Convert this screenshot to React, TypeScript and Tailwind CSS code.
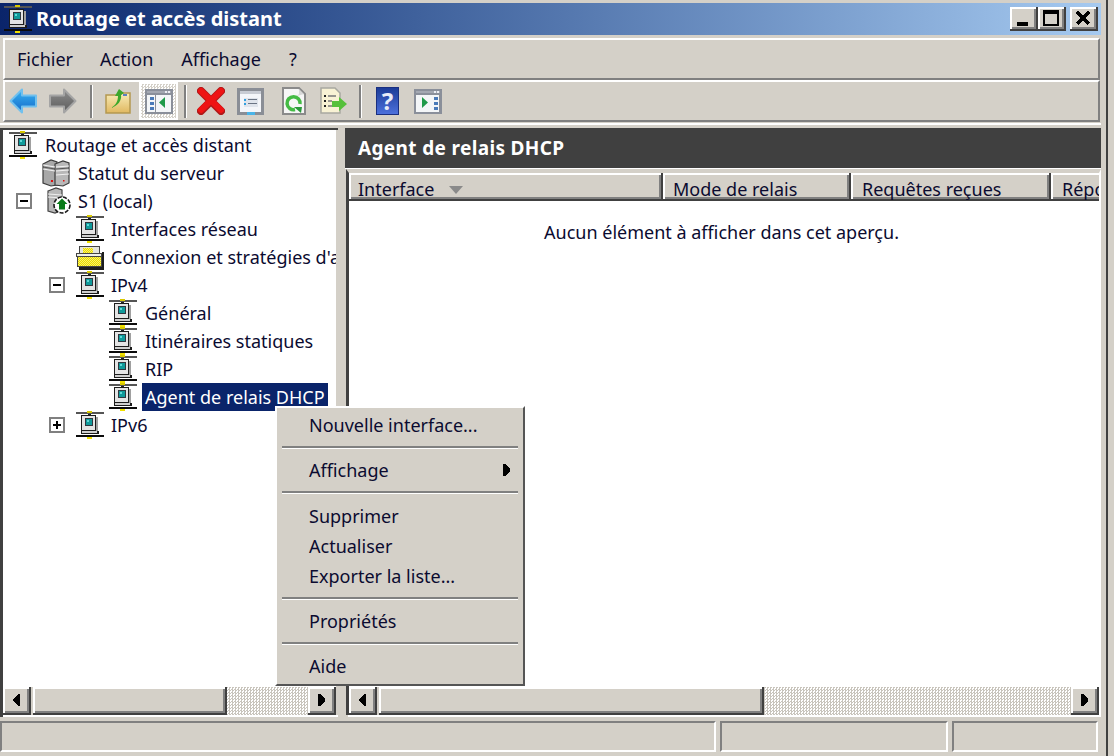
import React from "react";

// classic win2k bevel for buttons and scroll thumbs
const bevel =
    "bg-[#d4d0c8] border-r-2 border-b-2 border-[#404040] shadow-[inset_2px_2px_0_#fff,inset_-2px_-2px_0_#808080]";

function Computer({ size = 28 }: { size?: number }) {
    return (
        <svg width={size} height={size} viewBox="0 0 28 28" shapeRendering="crispEdges" className="shrink-0">
            <rect x="0" y="1" width="28" height="2" fill="#555" />
            <rect x="11" y="0" width="5" height="2" fill="#d8c800" />
            <rect x="12" y="3" width="3" height="1" fill="#222" />
            <rect x="5" y="4" width="15" height="16" fill="#1c1c1c" />
            <rect x="6" y="5" width="13" height="14" fill="#e4e4e4" />
            <rect x="9" y="7" width="8" height="8" fill="#303840" />
            <rect x="10" y="8" width="6" height="6" fill="#109a9a" />
            <rect x="11" y="9" width="2" height="2" fill="#60d8d8" />
            <rect x="20" y="6" width="2" height="14" fill="#a0a0a0" />
            <rect x="5" y="20" width="18" height="3" fill="#1c1c1c" />
            <rect x="6" y="20" width="15" height="2" fill="#cfcfcf" />
            <rect x="0" y="24" width="28" height="2" fill="#0c0c0c" />
            <rect x="11" y="26" width="5" height="2" fill="#f0e000" />
        </svg>
    );
}

function Servers() {
    return (
        <svg width="28" height="28" viewBox="0 0 28 28" className="shrink-0">
            <path d="M1 5 L9 1 L15 3 V26 L9 27 L1 24 Z" fill="#a8a8a8" stroke="#3c3c3c" strokeWidth="1.2" />
            <path d="M13 5 L21 2 L27 4 V24 L21 27 L13 26 Z" fill="#b8b8b8" stroke="#3c3c3c" strokeWidth="1.2" />
            <path d="M1 6 L13 8 M1 10 L13 12 M14 8 L27 7 M14 12 L27 11 M14 16 L27 15" stroke="#f0f0f0" strokeWidth="1.2" />
            <path d="M1 8 L13 10 M14 10 L27 9" stroke="#555" strokeWidth="1.2" />
            <rect x="9" y="21" width="2" height="2" fill="#e01010" />
            <rect x="21" y="21" width="1.5" height="1.5" fill="#e01010" />
        </svg>
    );
}

function ServerLocal() {
    return (
        <svg width="24" height="28" viewBox="0 0 24 28" className="shrink-0">
            <path d="M1 4 L9 1 L15 3 V23 L8 26 L1 24 Z" fill="#b8b8b8" stroke="#444" strokeWidth="1.2" />
            <path d="M1 7 L15 8 M1 10 L15 11" stroke="#eee" strokeWidth="1.2" />
            <circle cx="15" cy="18" r="8" fill="#fff" stroke="#1a1a1a" strokeWidth="1.6" strokeDasharray="4 1.5" />
            <path d="M15 11.5 L20.5 17 H18 V22.5 H12 V17 H9.5 Z" fill="#087a18" />
        </svg>
    );
}

function FolderPolicy() {
    return (
        <svg width="28" height="28" viewBox="0 0 28 28" shapeRendering="crispEdges" className="shrink-0">
            <defs>
                <pattern id="yellowdots" width="2" height="2" patternUnits="userSpaceOnUse">
                    <rect width="2" height="2" fill="#fbf36a" />
                    <rect width="1" height="1" fill="#e8d800" />
                    <rect x="1" y="1" width="1" height="1" fill="#e8d800" />
                </pattern>
            </defs>
            <rect x="3.5" y="3.5" width="20" height="7" fill="#e4e4dc" stroke="#444" />
            <rect x="7" y="5" width="10" height="5" fill="url(#yellowdots)" />
            <rect x="0.5" y="10.5" width="25" height="3" fill="#f0f0e8" stroke="#444" />
            <rect x="1.5" y="13.5" width="24" height="10" fill="url(#yellowdots)" stroke="#444" />
            <rect x="3" y="24" width="25" height="3" fill="#1c1c1c" />
            <rect x="26" y="9" width="2" height="18" fill="#1c1c1c" />
        </svg>
    );
}

function Expander({ open }: { open: boolean }) {
    return (
        <div className="w-4 h-4 border-2 border-[#808080] bg-white flex items-center justify-center shrink-0 relative">
            <div className="w-2 h-[2px] bg-black" />
            {!open && <div className="absolute w-[2px] h-2 bg-black" />}
        </div>
    );
}

type Node = {
    label: string;
    pad: number;
    icon?: "computer" | "servers" | "local" | "folder";
    gap: number;
    expander?: "open" | "closed";
    expanderPad?: number;
    selected?: boolean;
};

const tree: Node[] = [
    { label: "Routage et accès distant", pad: 6, gap: 8 },
    { label: "Statut du serveur", pad: 39, icon: "servers", gap: 8 },
    { label: "S1 (local)", pad: 44, icon: "local", gap: 7, expander: "open", expanderPad: 13 },
    { label: "Interfaces réseau", pad: 73, gap: 7 },
    { label: "Connexion et stratégies d'accès distant", pad: 73, icon: "folder", gap: 7 },
    { label: "IPv4", pad: 73, gap: 7, expander: "open", expanderPad: 46 },
    { label: "Général", pad: 106, gap: 8 },
    { label: "Itinéraires statiques", pad: 106, gap: 8 },
    { label: "RIP", pad: 106, gap: 8 },
    { label: "Agent de relais DHCP", pad: 106, gap: 5, selected: true },
    { label: "IPv6", pad: 73, gap: 7, expander: "closed", expanderPad: 46 },
];

function NodeIcon({ icon }: { icon?: Node["icon"] }) {
    if (icon === "servers") return <Servers />;
    if (icon === "local") return <ServerLocal />;
    if (icon === "folder") return <FolderPolicy />;
    return <Computer />;
}

function TreeRow({ node }: { node: Node }) {
    const left = node.expander ? node.expanderPad ?? 0 : node.pad;
    return (
        <div className="h-7 flex items-center whitespace-nowrap text-[#0b0b30]" style={{ paddingLeft: left }}>
            {node.expander && (
                <div className="flex items-center" style={{ width: node.pad - left }}>
                    <Expander open={node.expander === "open"} />
                </div>
            )}
            <NodeIcon icon={node.icon} />
            <span
                className={node.selected ? "bg-[#0a246a] text-white h-7 leading-[28px] px-[3px]" : ""}
                style={{ marginLeft: node.gap }}
            >
                {node.label}
            </span>
        </div>
    );
}

function ScrollArrow({ dir }: { dir: "left" | "right" }) {
    return (
        <div className={`${bevel} w-[28px] h-[28px] flex items-center justify-center shrink-0`}>
            <svg width="7" height="12" viewBox="0 0 7 12" shapeRendering="crispEdges">
                {dir === "left" ? <path d="M7 0 V12 H5 L0 7 V5 L5 0 Z" /> : <path d="M0 0 V12 H2 L7 7 V5 L2 0 Z" />}
            </svg>
        </div>
    );
}

function Scrollbar({ thumb, className }: { thumb: number; className?: string }) {
    return (
        <div className={`h-[28px] flex shrink-0 bg-[repeating-conic-gradient(#c8c4bc_0_25%,#fff_0_50%)] bg-[length:3px_3px] ${className ?? ""}`}>
            <ScrollArrow dir="left" />
            <div className="w-[2px] bg-[#d4d0c8]" />
            <div className={`${bevel} h-[28px]`} style={{ width: thumb }} />
            <div className="flex-1" />
            <ScrollArrow dir="right" />
        </div>
    );
}

function Sep({ ml, mr }: { ml: number; mr: number }) {
    return (
        <div
            className="w-[3px] h-[33px] border-l-2 border-[#808080] border-r border-r-white shrink-0"
            style={{ marginLeft: ml, marginRight: mr }}
        />
    );
}

function ArrowIcon({ id, top, bottom, edge, flip }: { id: string; top: string; bottom: string; edge: string; flip?: boolean }) {
    return (
        <svg width="28" height="26" viewBox="0 0 28 26" className={flip ? "-scale-x-100 shrink-0" : "shrink-0"}>
            <defs>
                <linearGradient id={id} x1="0" y1="0" x2="0" y2="1">
                    <stop offset="0" stopColor={top} />
                    <stop offset="1" stopColor={bottom} />
                </linearGradient>
            </defs>
            <path d="M1.5 13 L13 1.5 V7.5 H27 V18.5 H13 V24.5 Z" fill={`url(#${id})`} stroke={edge} strokeWidth="2" strokeLinejoin="round" />
        </svg>
    );
}

function WinIcon({ green }: { green: "left" | "right" }) {
    const panel = green === "left" ? 3 : 18;
    const arrow = green === "left" ? "M20 8 V19 L14 13.5 Z" : "M8 8 V19 L14 13.5 Z";
    return (
        <svg width="28" height="25" viewBox="0 0 28 25" shapeRendering="crispEdges" className="shrink-0">
            <rect x="0" y="0" width="28" height="25" fill="#8a8f9a" />
            <rect x="2" y="6" width="24" height="17" fill="#f4f6f8" />
            <rect x="2" y="2" width="24" height="2" fill="#a4a8b2" />
            <rect x="20" y="2" width="2" height="2" fill="#eceef4" />
            <rect x="23" y="2" width="2" height="2" fill="#eceef4" />
            <rect x={panel + 7} y="6" width="1" height="17" fill="#8a8f9a" />
            <rect x={panel + 2} y="8" width="4" height="3" fill="#4a7ab8" />
            <rect x={panel + 2} y="13" width="4" height="3" fill="#4a7ab8" />
            <rect x={panel + 2} y="18" width="4" height="3" fill="#4a7ab8" />
            <path d={arrow} fill="#1f9a4a" shapeRendering="auto" />
        </svg>
    );
}

function Toolbar() {
    return (
        <div className="h-[42px] flex items-center border-t-2 border-t-white border-b-2 border-b-[#808080] border-r-2 border-r-[#808080] border-l-2 border-l-white ml-[3px] mr-[1px] shrink-0">
            <div className="ml-[4px]">
                <ArrowIcon id="back" top="#38b4f4" bottom="#1468c8" edge="#70c0ee" />
            </div>
            <div className="ml-[12px]">
                <ArrowIcon id="fwd" top="#8c8c8c" bottom="#5c5c5c" edge="#a4a4a4" flip />
            </div>
            <Sep ml={13} mr={12} />
            {/* folder up */}
            <svg width="26" height="26" viewBox="0 0 26 26" className="shrink-0">
                <defs>
                    <linearGradient id="folderUp" x1="0" y1="0" x2="0" y2="1">
                        <stop offset="0" stopColor="#f8ecb8" />
                        <stop offset="1" stopColor="#e0b860" />
                    </linearGradient>
                </defs>
                <path d="M1 7 H15 L17 5 H25 V25 H1 Z" fill="url(#folderUp)" stroke="#b49850" strokeWidth="1.5" />
                <rect x="18" y="6" width="4" height="2" fill="#5a80c0" />
                <path d="M6 20 C11 17 13 13 13 8 L10 8 L14 1 L19 5 L16 7 C17 12 13 18 6 20 Z" fill="#3ca82c" />
            </svg>
            <div className="w-[39px] h-[38px] ml-[8px] border-2 border-white bg-[repeating-conic-gradient(#d4d0c8_0_25%,#fff_0_50%)] bg-[length:3px_3px] flex items-center justify-center shrink-0">
                <WinIcon green="left" />
            </div>
            <Sep ml={6} mr={10} />
            {/* delete */}
            <svg width="28" height="28" viewBox="0 0 28 28" className="shrink-0">
                <path d="M4 4 L24 24 M24 4 L4 24" stroke="#b01818" strokeWidth="8" strokeLinecap="round" />
                <path d="M4 4 L24 23 M24 4 L4 23" stroke="#ee1414" strokeWidth="6" strokeLinecap="round" />
            </svg>
            {/* properties */}
            <svg width="28" height="27" viewBox="0 0 28 27" shapeRendering="crispEdges" className="ml-[12px] shrink-0">
                <rect x="0" y="0" width="27" height="27" fill="#8a8e96" />
                <rect x="3" y="3" width="21" height="21" fill="#f4f6fa" />
                <rect x="3" y="3" width="21" height="3" fill="#c8ccd4" />
                <rect x="7" y="10" width="14" height="9" fill="#dfe4ec" />
                <rect x="7" y="11" width="2" height="2" fill="#30a0e0" />
                <rect x="11" y="11" width="9" height="1" fill="#6a7484" />
                <rect x="7" y="15" width="2" height="2" fill="#30a0e0" />
                <rect x="11" y="15" width="9" height="1" fill="#6a7484" />
                <rect x="10" y="24" width="8" height="3" fill="#4ab4e8" />
            </svg>
            {/* refresh */}
            <svg width="24" height="28" viewBox="0 0 24 28" className="ml-[17px] shrink-0">
                <path d="M1 1 H17 L23 7 V27 H1 Z" fill="#f6f6f6" stroke="#8a8a8a" strokeWidth="2" />
                <path d="M15 9 L17 7 V2 L22 7 Z" fill="#d8d8d8" />
                <path d="M13 22.5 A6.5 6.5 0 1 1 18 17" fill="none" stroke="#44bb44" strokeWidth="3.5" />
                <path d="M12 20 L20 20 L19 26 Z" fill="#2a9a3a" />
            </svg>
            {/* export list */}
            <svg width="28" height="28" viewBox="0 0 28 28" className="ml-[14px] shrink-0">
                <path d="M1 1 H15 L20 6 V26 H1 Z" fill="#f8f2d4" stroke="#a8a8a0" strokeWidth="1.5" />
                <path d="M4 9 H6 M4 14 H6 M4 19 H6" stroke="#222" strokeWidth="2" />
                <path d="M8 9 H16 M8 14 H12 M8 19 H12" stroke="#777" strokeWidth="1.5" />
                <path d="M12 14 H19 V10 L27 17 L19 24 V20 H12 Z" fill="#55c03a" />
            </svg>
            <Sep ml={11} mr={14} />
            {/* help */}
            <div className="w-[23px] h-[28px] bg-gradient-to-b from-[#1c3c98] to-[#4c70dc] border border-[#1a2f80] flex items-center justify-center shrink-0 text-[#e8ecf8] font-bold text-[24px] leading-none">
                ?
            </div>
            <div className="ml-[15px]">
                <WinIcon green="right" />
            </div>
        </div>
    );
}

const menu: (string | null)[] = [
    "Nouvelle interface...",
    null,
    "Affichage",
    null,
    "Supprimer",
    "Actualiser",
    "Exporter la liste...",
    null,
    "Propriétés",
    null,
    "Aide",
];

function ContextMenu() {
    return (
        <div className="absolute left-[275px] top-[406px] w-[250px] h-[280px] bg-[#d4d0c8] border-t-2 border-l-2 border-white border-r-2 border-b-2 border-r-[#555] border-b-[#555] pt-[2px] text-[#0b0b30]">
            {menu.map((item, i) =>
                item === null ? (
                    <div key={i} className={i === 3 ? "h-[16px] flex items-center px-[5px] pb-[2px]" : "h-[15px] flex items-center px-[5px]"}>
                        <div className="w-full border-t-2 border-t-[#808080] border-b border-b-white" />
                    </div>
                ) : (
                    <div key={i} className="h-[30px] flex items-center justify-between pl-[32px] pr-[13px]">
                        <span>{item}</span>
                        {item === "Affichage" && (
                            <svg width="7" height="12" viewBox="0 0 7 12" shapeRendering="crispEdges">
                                <path d="M0 0 V12 H2 L7 7 V5 L2 0 Z" />
                            </svg>
                        )}
                    </div>
                )
            )}
        </div>
    );
}

const columns = [
    { label: "Interface", w: 314, pad: "pl-[9px]" },
    { label: "Mode de relais", w: 188, pad: "pl-[10px]" },
    { label: "Requêtes reçues", w: 200, pad: "pl-[11px]" },
    { label: "Réponses", w: 60, pad: "pl-[11px]" },
];

export default function App() {
    return (
        <div className="relative w-[1114px] h-[756px] overflow-hidden bg-[#d4d0c8] flex font-['Noto_Sans',sans-serif] text-[18px] text-black">
            <div className="w-[1101px] flex flex-col pt-[3px] h-full">
                {/* title bar */}
                <div className="h-[32px] shrink-0 bg-gradient-to-r from-[#0a246a] to-[#a6caf0] flex items-center pl-[4px] pr-[3px]">
                    <Computer />
                    <span className="ml-[4px] text-white font-bold text-[20px]">Routage et accès distant</span>
                    <div className="ml-auto flex">
                        <div className={`${bevel} w-[28px] h-[24px] flex items-end pl-[7px] pb-[3px]`}>
                            <div className="w-[11px] h-[4px] bg-black" />
                        </div>
                        <div className={`${bevel} w-[28px] h-[24px] flex items-center justify-center`}>
                            <div className="w-[16px] h-[16px] border-2 border-t-[4px] border-black" />
                        </div>
                        <div className={`${bevel} w-[28px] h-[24px] flex items-center justify-center ml-[4px]`}>
                            <svg width="15" height="14" viewBox="0 0 15 14" shapeRendering="crispEdges">
                                <path d="M1 1 L13 13 M13 1 L1 13" stroke="#000" strokeWidth="3" />
                            </svg>
                        </div>
                    </div>
                </div>
                {/* menu bar */}
                <div className="mt-[3px] h-[42px] shrink-0 flex items-center border-t-2 border-t-white border-l-2 border-l-white border-b-2 border-b-[#808080] border-r-2 border-r-[#808080] ml-[3px] mr-[1px] text-[#0b0b30]">
                    <span className="ml-[12px]">Fichier</span>
                    <span className="ml-[27px]">Action</span>
                    <span className="ml-[28px]">Affichage</span>
                    <span className="ml-[28px]">?</span>
                </div>
                <Toolbar />
                <div className="h-[2px] mt-[1px] bg-white shrink-0" />
                {/* panes */}
                <div className="flex flex-1 min-h-0 pt-[3px]">
                    <div className="w-[338px] flex flex-col border-l-[3px] border-t-2 border-[#404040] shrink-0">
                        <div className="flex-1 min-h-0 bg-white overflow-hidden pt-[1px] mr-[2px] pr-[1px]">
                            {tree.map((n) => (
                                <TreeRow key={n.label} node={n} />
                            ))}
                        </div>
                        <Scrollbar thumb={194} className="mr-[2px]" />
                        <div className="h-[2px] bg-white shrink-0" />
                    </div>
                    <div className="ml-[7px] flex-1 flex flex-col min-w-0 min-h-0">
                        <div className="h-[40px] bg-[#404040] text-white font-bold flex items-center pl-[13px] shrink-0 text-[19px] tracking-[0.35px]">
                            Agent de relais DHCP
                        </div>
                        <div className="h-px bg-white shrink-0" />
                        <div className="flex-1 flex flex-col min-h-0 ml-[1px] border-l-[3px] border-t-4 border-t-[#d4d0c8] border-l-[#404040] border-r-2 border-r-white">
                            <div className="h-[28px] flex overflow-hidden shrink-0 text-[#0b0b30]">
                                {columns.map((c) => (
                                    <div
                                        key={c.label}
                                        className={`${bevel} ${c.pad} h-[28px] shrink-0 flex items-center pt-[7px] whitespace-nowrap`}
                                        style={{ width: c.w }}
                                    >
                                        {c.label}
                                        {c.label === "Interface" && (
                                            <svg width="14" height="8" viewBox="0 0 14 8" className="ml-[15px]">
                                                <path d="M0 0 H14 L7 8 Z" fill="#8a8a8a" />
                                            </svg>
                                        )}
                                    </div>
                                ))}
                            </div>
                            <div className="flex-1 min-h-0 bg-white text-center pt-[18px] pr-[5px] text-[#0b0b30]">
                                Aucun élément à afficher dans cet aperçu.
                            </div>
                            <Scrollbar thumb={385} />
                        </div>
                        <div className="h-[2px] bg-white shrink-0 ml-[3px]" />
                    </div>
                </div>
                {/* status bar */}
                <div className="h-[31px] mt-[4px] mb-[4px] flex gap-[4px] shrink-0 mr-[3px]">
                    <div className="w-[716px] border-t-2 border-l-2 border-[#808080] border-b-2 border-r-2 border-b-white border-r-white" />
                    <div className="w-[228px] border-t-2 border-l-2 border-[#808080] border-b-2 border-r-2 border-b-white border-r-white" />
                    <div className="flex-1 border-t-2 border-l-2 border-[#808080] border-b-2 border-r-2 border-b-white border-r-white" />
                </div>
            </div>
            <div className="w-[5px]" />
            <div className="w-[2px] bg-[#404040]" />
            <ContextMenu />
        </div>
    );
}
